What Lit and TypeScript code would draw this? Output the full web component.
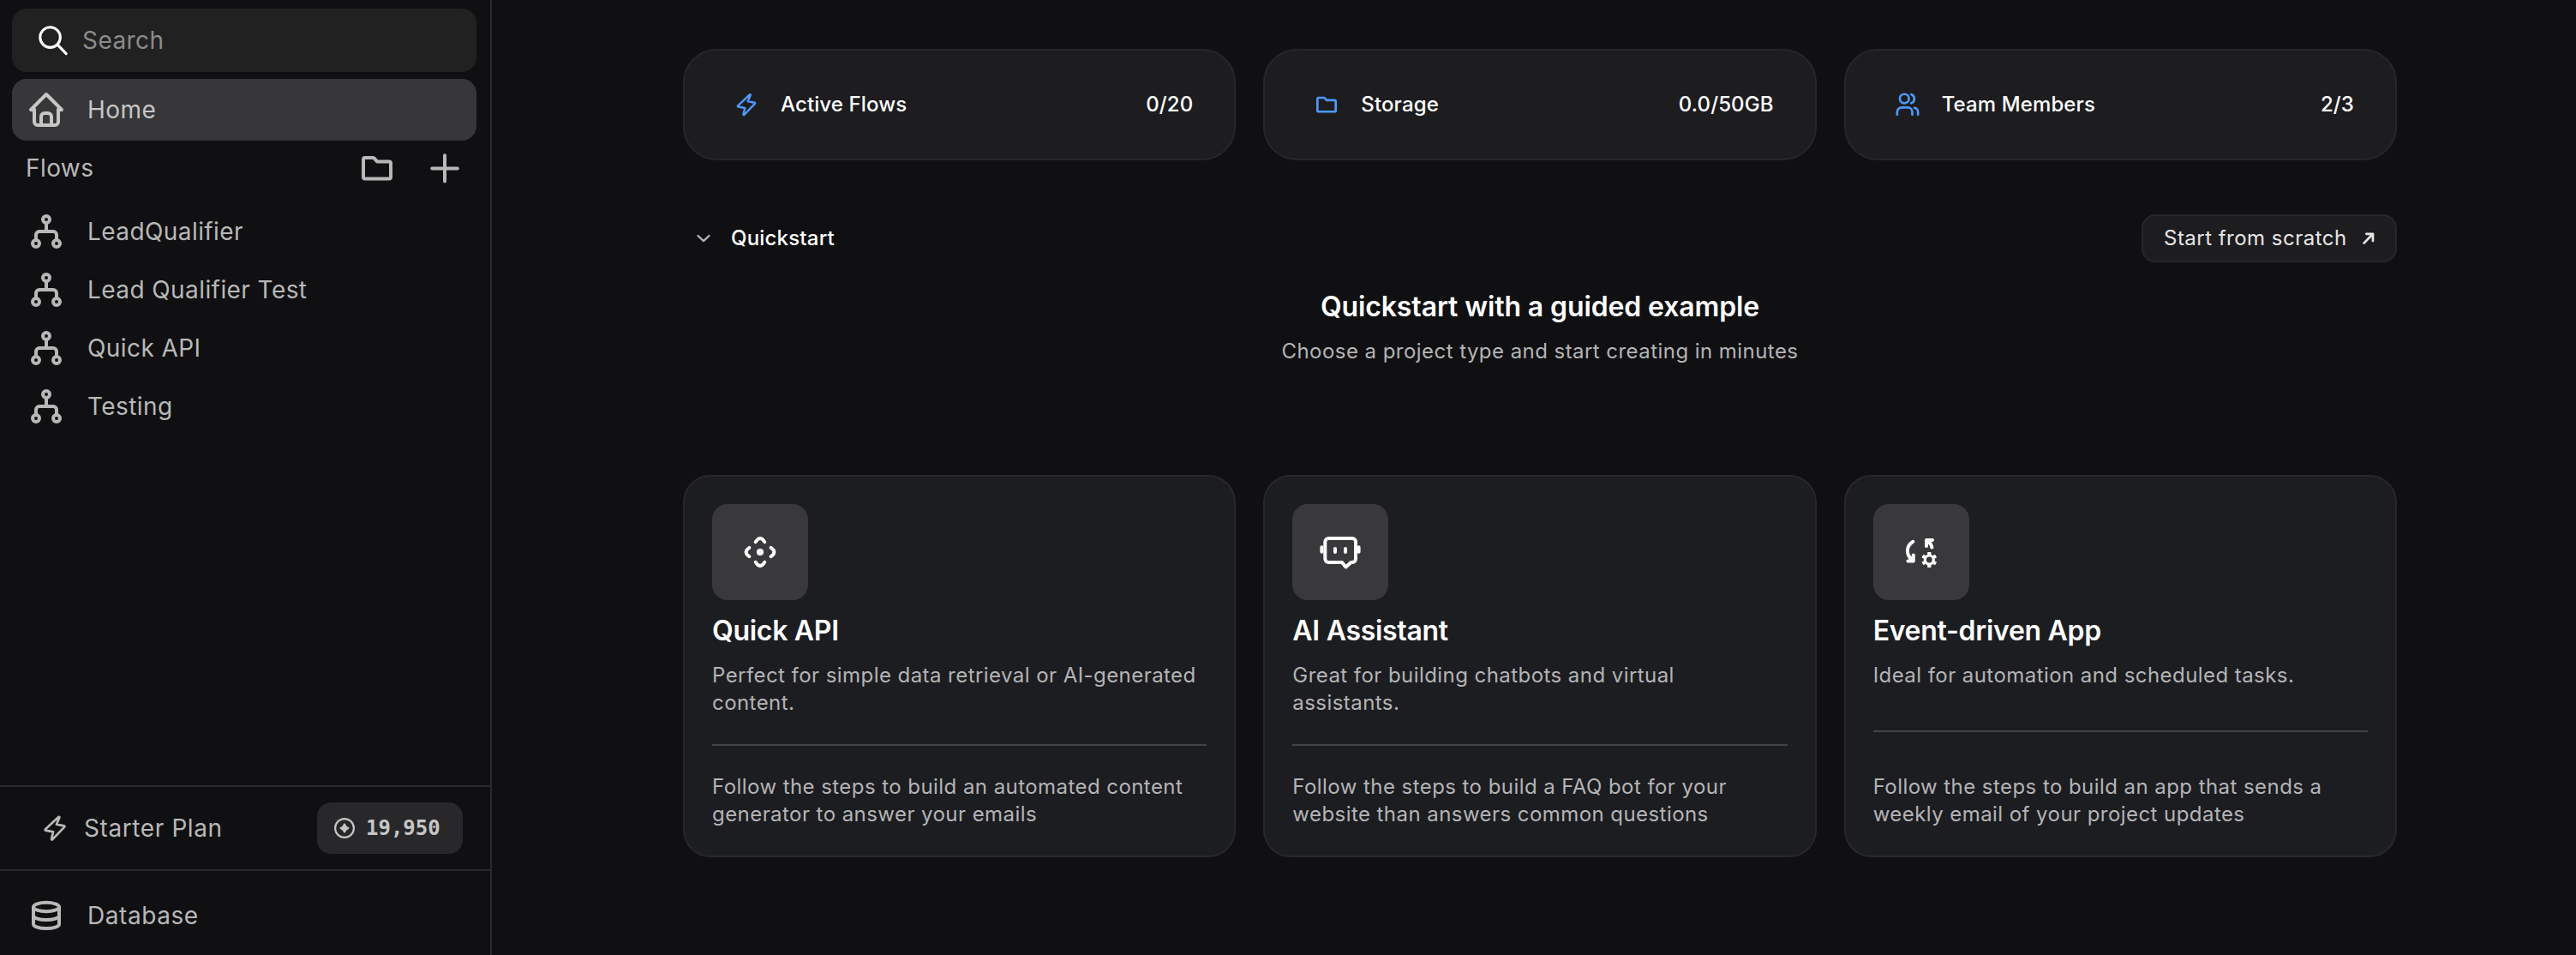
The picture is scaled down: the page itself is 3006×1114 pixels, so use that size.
import { LitElement, html, css, svg } from "lit";
import { customElement, property } from "lit/decorators.js";

const icons: Record<string, unknown> = {
  search: svg`<circle cx="8.9" cy="8.9" r="7.2"/><path d="M14 14 20.3 20.5"/>`,
  home: svg`<path d="M5 12H3l9-9 9 9h-2"/><path d="M5 12v7a2 2 0 0 0 2 2h10a2 2 0 0 0 2-2v-7"/><path d="M9 21v-5a2 2 0 0 1 2-2h2a2 2 0 0 1 2 2v5"/>`,
  folder: svg`<path d="M4 7a1 1 0 0 1 1-1h4.6a1 1 0 0 1 .75.34L12 8.2H19a1 1 0 0 1 1 1V17.2a1 1 0 0 1-1 1H5a1 1 0 0 1-1-1z"/>`,
  plus: svg`<path d="M12 4.6v15.2M4.6 12.2h14.8"/>`,
  flow: svg`<circle cx="12" cy="5" r="2"/><circle cx="6" cy="19" r="2"/><circle cx="18" cy="19" r="2"/><path d="M6 17v-3a2 2 0 0 1 2-2h8a2 2 0 0 1 2 2v3M12 7v5"/>`,
  bolt: svg`<path transform="translate(12 12) scale(.89 .92) translate(-12 -12)" d="M15.2 2.6 3.6 13.1a.5.5 0 0 0 .25.87L10.6 15.2 9 21.1a.5.5 0 0 0 .83.5L20.4 11a.5.5 0 0 0-.25-.87L13.4 8.9l2.63-5.8a.5.5 0 0 0-.83-.5z"/>`,
  coin: svg`<circle cx="12" cy="12" r="10.9"/><path d="M12 7.6 Q13.1 10.9 16.4 12 Q13.1 13.1 12 16.4 Q10.9 13.1 7.6 12 Q10.9 10.9 12 7.6z" fill="currentColor"/>`,
  database: svg`<ellipse cx="12" cy="7" rx="7.5" ry="2.6"/><path d="M4.5 7v10c0 1.4 3.36 2.5 7.5 2.5s7.5-1.1 7.5-2.5V7"/><path d="M4.5 12c0 1.4 3.36 2.5 7.5 2.5s7.5-1.1 7.5-2.5"/>`,
  users: svg`<circle cx="9.2" cy="6.8" r="4"/><path d="M15.2 3a4.1 4.1 0 0 1 0 7.7"/><path d="M2.9 20.9v-2.4a4 4 0 0 1 4-4h5.2a4 4 0 0 1 4 4v2.4"/><path d="M18 14.8a4 4 0 0 1 3.1 3.9v2.2"/>`,
  chevron: svg`<path d="M5.5 9 12 15.2 18.5 9"/>`,
  arrow: svg`<path d="M7 17.2 16.4 7.4M9.6 7.2H16.6V14.8"/>`,
  api: svg`<path d="M18.7 12.2 Q24 3.6 29.3 12.2"/><path d="M18.7 35.8 Q24 44.4 29.3 35.8"/><path d="M11.4 18.8 Q3.8 24 11.4 29.2"/><path d="M36.6 18.8 Q44.2 24 36.6 29.2"/><circle cx="24" cy="24" r="4.1" fill="currentColor" stroke="none"/>`,
  bot: svg`<path d="M10.3 8H38a4 4 0 0 1 4 4V32a4 4 0 0 1-4 4h-1.5L30.5 41.5 26 36H10.3a4 4 0 0 1-4-4V12a4 4 0 0 1 4-4z"/><path d="M18 20v4M30 20v4M2.4 18.2v5.6M45.6 18.2v5.6"/>`,
  event: svg`<path d="M14.3 11.8C6 17 6 27 13 32.5M8.4 34.4H14.8V27.6M30 17V10H37M30.8 10.8Q35.6 13.6 36.4 18.6"/><circle cx="33.3" cy="33" r="5" stroke-width="3.2"/><path stroke-linecap="butt" stroke-width="4.2" d="M33.3 24v4M33.3 38v4M25.5 28.5l3.46 2M37.6 35.5l3.46 2M25.5 37.5l3.46-2M37.6 30.5l3.46-2"/>`,
};

@customElement("ui-icon")
class UiIcon extends LitElement {
  @property() name = "";
  @property({ type: Number }) size = 48;
  @property({ type: Number }) grid = 24;
  @property({ type: Number }) weight = 2;
  static styles = css`
    :host { display: block; flex: none; }
    svg { display: block; fill: none; stroke: currentColor; stroke-linecap: round; stroke-linejoin: round; overflow: visible; }
  `;
  render() {
    return html`<svg width=${this.size} height=${this.size} viewBox="0 0 ${this.grid} ${this.grid}" stroke-width=${this.weight}>${icons[this.name]}</svg>`;
  }
}

@customElement("app-sidebar")
class AppSidebar extends LitElement {
  static styles = css`
    :host { display: flex; flex-direction: column; box-sizing: border-box; width: 574px; border-right: 2px solid #2b2b2d; padding-top: 10px; color: #b8b8b8; font-size: 28px; line-height: 34px; letter-spacing: 0.42px; }
    .search { display: flex; align-items: center; height: 74px; margin: 0 16px 8px 14px; border-radius: 17px; background: #212121; color: #8c8c8c; padding-left: 30px; gap: 16px; }
    .search ui-icon { color: #fff; }
    .row { display: flex; align-items: center; height: 68px; padding-left: 30px; gap: 24px; }
    .home { height: 72px; margin: 0 16px 0 14px; padding-left: 16px; border-radius: 17px; background: #373739; color: #c6c6c6; }
    .heading { display: flex; align-items: center; height: 64px; padding: 0 29px 0 30px; margin-bottom: 8px; color: #b8b8b8; }
    .heading .label { flex: 1; }
    .heading .add { margin-left: 31px; }
    .foot { margin-top: auto; }
    .plan { display: flex; align-items: center; height: 96px; border: solid #2b2b2d; border-width: 2px 0; padding: 0 32px 0 46px; }
    .plan .label { flex: 1; margin-left: 16px; letter-spacing: 0.6px; }
    .badge { display: flex; align-items: center; box-sizing: border-box; width: 170px; height: 60px; padding-left: 20px; gap: 13px; border-radius: 16px; background: #28282a; color: #c6c6c6; font: bold 24px/32px "DejaVu Sans Mono", monospace; letter-spacing: 0; }
    .db { height: 98px; padding-top: 6px; box-sizing: border-box; letter-spacing: 0.56px; }
  `;
  render() {
    const flows = ["LeadQualifier", "Lead Qualifier Test", "Quick API", "Testing"];
    return html`
      <div class="search"><ui-icon name="search" size="36" grid="22" weight="1.9"></ui-icon><span>Search</span></div>
      <div class="row home"><ui-icon name="home"></ui-icon><span>Home</span></div>
      <div class="heading">
        <span class="label">Flows</span>
        <ui-icon name="folder" size="48" weight="2"></ui-icon>
        <ui-icon class="add" name="plus" size="48" weight="2"></ui-icon>
      </div>
      ${flows.map((f) => html`<div class="row"><ui-icon name="flow"></ui-icon><span>${f}</span></div>`)}
      <div class="foot">
        <div class="plan">
          <ui-icon name="bolt" size="36" weight="2"></ui-icon>
          <span class="label">Starter Plan</span>
          <span class="badge"><ui-icon name="coin" size="24" weight="2.2"></ui-icon>19,950</span>
        </div>
        <div class="row db"><ui-icon name="database"></ui-icon><span>Database</span></div>
      </div>`;
  }
}

@customElement("stat-card")
class StatCard extends LitElement {
  @property() icon = "";
  @property() label = "";
  @property() value = "";
  static styles = css`
    :host { display: flex; align-items: center; box-sizing: border-box; height: 130px; padding: 0 48px 0 56px; border: 2px solid #272729; border-radius: 39px; background: #1d1d1f; color: #fff; font-size: 24px; font-weight: 500; line-height: 32px; letter-spacing: 0.12px; }
    .icon { color: #4d9aff; margin-right: 24px; }
    .label { flex: 1; }
  `;
  render() {
    return html`<ui-icon class="icon" name=${this.icon} size=${32} weight=${2}></ui-icon>
      <span class="label">${this.label}</span><span>${this.value}</span>`;
  }
}

@customElement("example-card")
class ExampleCard extends LitElement {
  @property() icon = "";
  @property() heading = "";
  @property() text = "";
  @property() steps = "";
  static styles = css`
    :host { display: flex; flex-direction: column; justify-content: space-between; box-sizing: border-box; height: 446px; padding: 32px; border: 2px solid #28282a; border-radius: 32px; background: #1c1d20; color: #b4b4b6; font-size: 24px; line-height: 32px; letter-spacing: 0.44px; }
    .tile { display: flex; align-items: center; justify-content: center; width: 112px; height: 112px; border-radius: 18px; background: #39393b; color: #fff; }
    .title { margin: 16px 0; font-size: 32px; font-weight: 600; line-height: 40px; letter-spacing: -0.3px; color: #fff; }
    .text, .steps { margin: 0; }
    .rule { height: 2px; background: #434346; }
  `;
  render() {
    return html`
      <div>
        <div class="tile"><ui-icon name=${this.icon} size=${48} grid=${48} weight=${4}></ui-icon></div>
        <h3 class="title">${this.heading}</h3>
        <p class="text">${this.text}</p>
      </div>
      <div class="rule"></div>
      <p class="steps">${this.steps}</p>`;
  }
}

@customElement("app-root")
class AppRoot extends LitElement {
  static styles = css`
    :host { display: flex; width: 3006px; height: 1114px; overflow: hidden; background: #101012; font-family: Inter, sans-serif; }
    main { display: flex; flex-direction: column; width: 2000px; margin-left: 223px; padding-top: 57px; }
    .grid { display: grid; grid-template-columns: repeat(3, 1fr); gap: 32px; }
    .bar { display: flex; align-items: center; height: 56px; margin: 63px 0 0; color: #fff; font-size: 24px; font-weight: 500; line-height: 32px; letter-spacing: 0.2px; }
    .bar .chev { color: #b4b4b6; margin: 0 20px 0 12px; }
    .bar .name { flex: 1; }
    .scratch { display: flex; align-items: center; justify-content: space-between; box-sizing: border-box; width: 298px; height: 56px; padding: 0 18px 0 24px; border: 2px solid #28282a; border-radius: 16px; background: #1d1d1f; color: #e6e6e6; font: 400 24px/32px Inter, sans-serif; letter-spacing: 0.48px; }
    .intro { text-align: center; height: 248px; box-sizing: border-box; padding-top: 32px; }
    .intro h2 { margin: 0; font-size: 32px; line-height: 40px; font-weight: 600; letter-spacing: -0.12px; color: #fff; }
    .intro p { margin: 16px 0 0; font-size: 24px; line-height: 32px; letter-spacing: 0.45px; color: #b4b4b6; }
  `;
  render() {
    return html`
      <app-sidebar></app-sidebar>
      <main>
        <div class="grid">
          <stat-card icon="bolt" label="Active Flows" value="0/20"></stat-card>
          <stat-card icon="folder" label="Storage" value="0.0/50GB"></stat-card>
          <stat-card icon="users" label="Team Members" value="2/3"></stat-card>
        </div>
        <div class="bar">
          <ui-icon class="chev" name="chevron" size="24" weight="2.4"></ui-icon>
          <span class="name">Quickstart</span>
          <button class="scratch">Start from scratch<ui-icon name="arrow" size="26" weight="2.5"></ui-icon></button>
        </div>
        <div class="intro">
          <h2>Quickstart with a guided example</h2>
          <p>Choose a project type and start creating in minutes</p>
        </div>
        <div class="grid">
          <example-card icon="api" heading="Quick API" text="Perfect for simple data retrieval or AI-generated content." steps="Follow the steps to build an automated content generator to answer your emails"></example-card>
          <example-card icon="bot" heading="AI Assistant" text="Great for building chatbots and virtual assistants." steps="Follow the steps to build a FAQ bot for your website than answers common questions"></example-card>
          <example-card icon="event" heading="Event-driven App" text="Ideal for automation and scheduled tasks." steps="Follow the steps to build an app that sends a weekly email of your project updates"></example-card>
        </div>
      </main>`;
  }
}
